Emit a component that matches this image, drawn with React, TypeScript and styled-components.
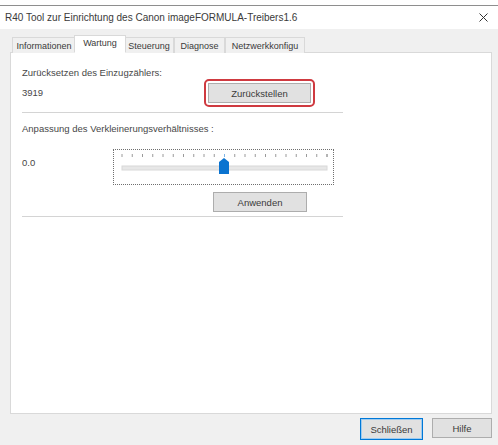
import React from "react";
import styled, { createGlobalStyle } from "styled-components";

const Global = createGlobalStyle`
  html, body { margin: 0; padding: 0; background: #ffffff; }
  body { font-family: "Liberation Sans", Arial, sans-serif; }
  * { box-sizing: border-box; }
`;

const Window = styled.div`
  width: 498px;
  height: 445px;
  display: flex;
  flex-direction: column;
  background: #ffffff;
  padding-top: 5px;
`;

const Frame = styled.div`
  flex: 1;
  display: flex;
  flex-direction: column;
  border-top: 1px solid #8e8e8e;
`;

const TitleBar = styled.div`
  height: 23px;
  display: flex;
  align-items: center;
  justify-content: space-between;
  padding: 0 10px 0 5px;
  background: #ffffff;
  font-size: 10px;
  color: #3a3a3a;
`;

const CloseIcon = styled.svg`
  width: 9px;
  height: 9px;
`;

const Client = styled.div`
  flex: 1;
  display: flex;
  flex-direction: column;
  background: #f0f0f0;
  padding: 6px 6px 0 10px;
`;

const TabStrip = styled.div`
  display: flex;
  align-items: flex-end;
  padding-left: 2px;
  height: 18px;
  position: relative;
  z-index: 1;
`;

const Tab = styled.div<{ $w: number; $active?: boolean }>`
  width: ${(p) => p.$w}px;
  height: ${(p) => (p.$active ? 18 : 16)}px;
  margin: ${(p) => (p.$active ? "0 -2px" : "0")};
  display: flex;
  align-items: center;
  justify-content: center;
  font-size: 9px;
  color: #3a3a3a;
  background: ${(p) => (p.$active ? "#ffffff" : "#f0f0f0")};
  border: 1px solid #d9d9d9;
  border-bottom: ${(p) => (p.$active ? "1px solid #ffffff" : "none")};
  position: relative;
  z-index: ${(p) => (p.$active ? 2 : 1)};
  padding-bottom: ${(p) => (p.$active ? 2 : 0)}px;
  white-space: nowrap;
  overflow: hidden;
`;

const Panel = styled.div`
  height: 362px;
  margin-top: -1px;
  background: #ffffff;
  border: 1px solid #d9d9d9;
  padding: 14px 0 0 11px;
  display: flex;
  flex-direction: column;
`;

const Section = styled.div`
  width: 321px;
  display: flex;
  flex-direction: column;
`;

const Label = styled.div<{ $mt?: number }>`
  font-size: 9.5px;
  line-height: 12px;
  color: #474747;
  margin-top: ${(p) => p.$mt ?? 0}px;
`;

const Row = styled.div`
  display: grid;
  grid-template-columns: 182px auto;
  align-items: center;
`;

const SliderRow = styled.div`
  display: grid;
  grid-template-columns: 91px auto;
  align-items: start;
  margin-top: 14px;
`;

const Value = styled.div<{ $pt?: number }>`
  font-size: 9.5px;
  line-height: 12px;
  color: #474747;
  padding-top: ${(p) => p.$pt ?? 0}px;
`;

const Highlight = styled.div`
  display: inline-flex;
  padding: 2px;
  border: 2px solid #cf3a40;
  border-radius: 5px;
  justify-self: start;
`;

const Button = styled.div<{ $w: number; $default?: boolean }>`
  width: ${(p) => p.$w}px;
  height: ${(p) => (p.$default ? 22 : 20)}px;
  display: flex;
  align-items: center;
  justify-content: center;
  background: #e1e1e1;
  border: 1px solid ${(p) => (p.$default ? "#0078d7" : "#adadad")};
  box-shadow: ${(p) => (p.$default ? "inset 0 0 0 1px #9fcbef" : "none")};
  font-size: 9.5px;
  color: #3a3a3a;
`;

const ApplyLine = styled.div`
  margin-top: 7px;
  padding-left: 191px;
`;

const Separator = styled.div<{ $mt: number }>`
  height: 1px;
  background: #d4d4d4;
  margin-top: ${(p) => p.$mt}px;
`;

const SliderBox = styled.div`
  width: 221px;
  height: 36px;
  border: 1px dotted #6f6f6f;
  display: flex;
`;

const Footer = styled.div`
  display: flex;
  justify-content: flex-end;
  gap: 9px;
  padding-top: 4px;
`;

const ticks = Array.from({ length: 21 }, (_, i) => 8 + i * 10.25);

function TrackBar() {
  return (
    <svg width="219" height="34" viewBox="0 0 219 34">
      {ticks.map((x, i) => (
        <line
          key={i}
          x1={x}
          x2={x}
          y1={4}
          y2={7}
          stroke={i === 10 ? "#7fb6e6" : "#9a9a9a"}
          strokeWidth="1"
        />
      ))}
      <line x1={213} x2={213} y1={4} y2={7} stroke="#9a9a9a" strokeWidth="1" />
      <rect x="8" y="16" width="205" height="4" fill="#e7e7e7" stroke="#d8d8d8" strokeWidth="1" />
      <path d="M105 12 L110 8 L115 12 L115 24 L105 24 Z" fill="#0a73d0" />
    </svg>
  );
}

export default function App() {
  return (
    <>
      <Global />
      <Window>
        <Frame>
          <TitleBar>
            <span>R40 Tool zur Einrichtung des Canon imageFORMULA-Treibers1.6</span>
            <CloseIcon viewBox="0 0 9 9">
              <path d="M0.5 0.5 L8.5 8.5 M8.5 0.5 L0.5 8.5" stroke="#333" strokeWidth="1" />
            </CloseIcon>
          </TitleBar>
          <Client>
            <TabStrip>
              <Tab $w={64}>Informationen</Tab>
              <Tab $w={52} $active>Wartung</Tab>
              <Tab $w={50}>Steuerung</Tab>
              <Tab $w={51}>Diagnose</Tab>
              <Tab $w={80}>Netzwerkkonfigu</Tab>
            </TabStrip>
            <Panel>
              <Section>
                <Label>Zurücksetzen des Einzugzählers:</Label>
                <Row>
                  <Value>3919</Value>
                  <Highlight>
                    <Button $w={103}>Zurückstellen</Button>
                  </Highlight>
                </Row>
                <Separator $mt={5} />
                <Label $mt={10}>Anpassung des Verkleinerungsverhältnisses :</Label>
                <SliderRow>
                  <Value $pt={8}>0.0</Value>
                  <SliderBox>
                    <TrackBar />
                  </SliderBox>
                </SliderRow>
                <ApplyLine>
                  <Button $w={94}>Anwenden</Button>
                </ApplyLine>
                <Separator $mt={4} />
              </Section>
            </Panel>
            <Footer>
              <Button $w={63} $default>Schließen</Button>
              <Button $w={60}>Hilfe</Button>
            </Footer>
          </Client>
        </Frame>
      </Window>
    </>
  );
}
